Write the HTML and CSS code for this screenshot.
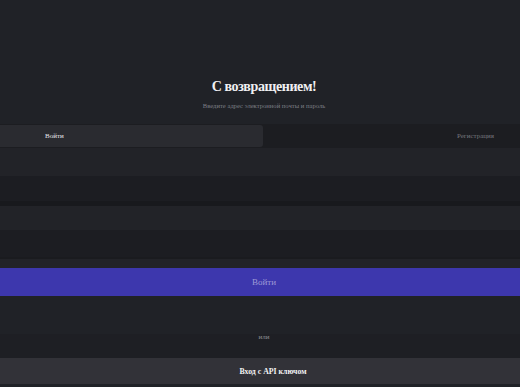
FILE: index.html
```html
<!DOCTYPE html>
<html lang="ru">
<head>
<meta charset="utf-8">
<link rel="stylesheet" href="styles.css">
</head>
<body>
<main class="auth">
  <header class="head">
    <h1 class="title">С возвращением!</h1>
    <p class="subtitle">Введите адрес электронной почты и пароль</p>
  </header>
  <nav class="tabs">
    <div class="tab tab-active">Войти</div>
    <div class="tab tab-idle">Регистрация</div>
  </nav>
  <form class="form">
    <div class="label-row"></div>
    <div class="input-row"></div>
    <div class="divider"></div>
    <div class="label-row label-row-2"></div>
    <div class="input-row input-row-2"></div>
    <div class="gap-row"></div>
    <button type="button" class="btn-primary">Войти</button>
    <div class="or-block"><span class="or-text">или</span></div>
    <div class="or-tail"></div>
    <button type="button" class="btn-secondary"><span class="key-icon"></span><span>Вход с API ключом</span></button>
  </form>
</main>
</body>
</html>
```

FILE: styles.css
```css
html, body {
  margin: 0;
  padding: 0;
  background: #202227;
  font-family: "Liberation Serif", "Times New Roman", serif;
  overflow: hidden;
}

.auth {
  display: flex;
  flex-direction: column;
  width: 528px;
}

.head {
  height: 124px;
  display: flex;
  flex-direction: column;
  align-items: center;
  justify-content: flex-end;
  box-sizing: border-box;
}

.title {
  margin: 0;
  font-size: 14px;
  letter-spacing: -0.4px;
  font-weight: bold;
  color: #f0f0f2;
  line-height: 18px;
}

.subtitle {
  margin: 5px 0 14px;
  font-size: 6.6px;
  line-height: 9px;
  color: #7c7e85;
}

.tabs {
  display: flex;
  height: 24px;
  background: #1c1d21;
  padding: 1px 0;
  box-sizing: border-box;
}

.tab {
  display: flex;
  align-items: center;
  font-size: 7px;
}

.tab-active {
  width: 263px;
  background: #2a2b30;
  border-radius: 0 3px 3px 0;
  color: #e4e4e8;
  padding-left: 45px;
  box-sizing: border-box;
}

.tab-idle {
  flex: 1;
  justify-content: flex-end;
  padding-right: 34px;
  color: #74767d;
}

.form {
  display: flex;
  flex-direction: column;
  margin: 0;
}

.label-row {
  height: 28px;
  background: #222328;
}

.input-row {
  height: 25px;
  background: #1c1d22;
}

.divider {
  height: 5px;
  background: #18191d;
}

.label-row-2 {
  height: 24px;
}

.input-row-2 {
  height: 27px;
}

.gap-row {
  height: 11px;
  background: #222328;
  border-top: 2px solid #1a1b1f;
  box-sizing: border-box;
}

.btn-primary {
  height: 28px;
  border: 0;
  margin: 0;
  background: #3d37ad;
  color: #9d9ad6;
  font-family: inherit;
  font-size: 9px;
  padding: 0;
}

.or-block {
  height: 38px;
  background: #202227;
  display: flex;
  align-items: flex-end;
  justify-content: center;
}

.or-text {
  font-size: 7px;
  color: #8a8c92;
  line-height: 7px;
  transform: translateY(7px);
}

.or-tail {
  height: 24px;
  background: #1e1f24;
}

.btn-secondary {
  height: 26px;
  border: 0;
  margin: 0;
  background: #323238;
  color: #f2f2f4;
  font-family: inherit;
  font-size: 7.8px;
  font-weight: bold;
  padding: 0;
  display: flex;
  align-items: center;
  justify-content: center;
  gap: 6px;
}

.key-icon {
  width: 12px;
  height: 12px;
  display: block;
}
```
